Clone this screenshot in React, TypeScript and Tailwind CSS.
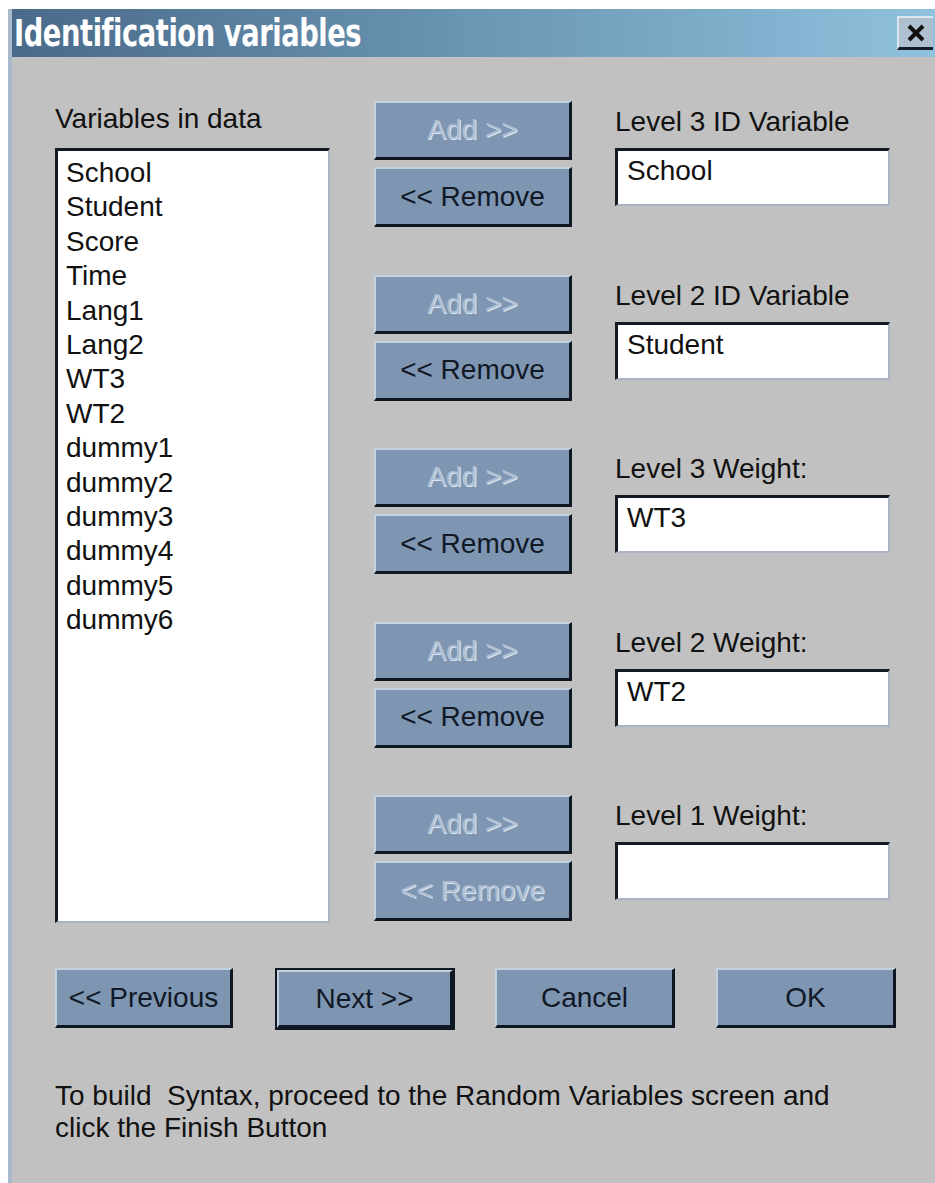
import React from 'react';

const variables = [
  'School', 'Student', 'Score', 'Time', 'Lang1', 'Lang2', 'WT3', 'WT2',
  'dummy1', 'dummy2', 'dummy3', 'dummy4', 'dummy5', 'dummy6',
];

const slots = [
  { label: 'Level 3 ID Variable', value: 'School', canRemove: true },
  { label: 'Level 2 ID Variable', value: 'Student', canRemove: true },
  { label: 'Level 3 Weight:', value: 'WT3', canRemove: true },
  { label: 'Level 2 Weight:', value: 'WT2', canRemove: true },
  { label: 'Level 1 Weight:', value: '', canRemove: false },
];

const font = "font-['Liberation_Sans',Arial,sans-serif]";

function Btn({ children, disabled, className = '' }: { children: React.ReactNode; disabled?: boolean; className?: string }) {
  return (
    <button
      disabled={disabled}
      className={`flex items-center justify-center bg-[#7e96b2] border-t-2 border-l-2 border-t-[#c4d2e0] border-l-[#c4d2e0] border-b-[3px] border-r-[3px] border-b-[#0f1722] border-r-[#0f1722] text-[28px] leading-none ${
        disabled ? 'text-[#aebfd3] [text-shadow:1px_1px_0_#dce6f0]' : 'text-[#111826]'
      } ${className}`}
    >
      {children}
    </button>
  );
}

function Field({ value }: { value: string }) {
  return (
    <div className="h-[58px] bg-white border-t-[3px] border-l-[3px] border-t-[#131a24] border-l-[#131a24] border-b-2 border-r-2 border-b-[#a9b5c4] border-r-[#a9b5c4] px-[9px] pt-[4px] text-[28px] leading-[32px] text-[#111]">
      {value}
    </div>
  );
}

export default function App() {
  return (
    <div className={`w-[935px] h-[1183px] bg-white pt-[9px] pl-[8px] ${font}`}>
      <div className="h-full flex flex-col border-l-4 border-[#a8b9cb]">
        {/* title bar */}
        <div className="h-[48px] flex items-center justify-between pl-[2px] bg-gradient-to-r from-[#4a6a8b] via-[#6b96b4] to-[#8fc2de]">
          <span className="inline-block origin-left scale-x-[0.82] font-['Liberation_Sans_Narrow','DejaVu_Sans_Condensed',sans-serif] font-bold text-[37px] leading-none text-white tracking-[-0.5px]">
            Identification variables
          </span>
          <div className="w-[36px] h-[34px] mr-[2px] flex items-center justify-center bg-[#aebfcf] border-t-2 border-l-2 border-t-[#dbe6ef] border-l-[#dbe6ef] border-b-[3px] border-r-0 border-b-[#141c26]">
            <svg width="20" height="20" viewBox="0 0 20 20">
              <path d="M3 3 L17 17 M17 3 L3 17" stroke="#111" strokeWidth="4" />
            </svg>
          </div>
        </div>

        {/* dialog body */}
        <div className="flex-1 bg-[#c1c1c1] pl-[43px] pt-[44px]">
          <div className="flex">
            <div className="w-[275px] flex flex-col">
              <div className="text-[28px] leading-none text-[#111] pt-[4px] h-[47px]">Variables in data</div>
              <div className="h-[775px] bg-white border-t-[3px] border-l-[3px] border-t-[#131a24] border-l-[#131a24] border-b-2 border-r-2 border-b-[#a9b5c4] border-r-[#a9b5c4] pl-[8px] pt-[5px]">
                {variables.map((v) => (
                  <div key={v} className="text-[28px] leading-[34.4px] text-[#111]">{v}</div>
                ))}
              </div>
            </div>

            <div className="ml-[44px] flex flex-col gap-[47.5px]">
              {slots.map((s) => (
                <div key={s.label} className="flex">
                  <div className="w-[198px] flex flex-col gap-[7px]">
                    <Btn disabled className="h-[59px]">Add &gt;&gt;</Btn>
                    <Btn disabled={!s.canRemove} className="h-[60px]">&lt;&lt; Remove</Btn>
                  </div>
                  <div className="ml-[43px] w-[275px] flex flex-col">
                    <div className="text-[28px] leading-none text-[#111] pt-[7px] h-[47px]">{s.label}</div>
                    <Field value={s.value} />
                  </div>
                </div>
              ))}
            </div>
          </div>

          {/* wizard navigation */}
          <div className="flex mt-[45px]">
            <Btn className="w-[178px] h-[60px]">&lt;&lt; Previous</Btn>
            <div className="ml-[42px] w-[180px] h-[62px] border-2 border-[#0f1722] flex">
              <Btn className="flex-1">Next &gt;&gt;</Btn>
            </div>
            <Btn className="ml-[40px] w-[180px] h-[60px]">Cancel</Btn>
            <Btn className="ml-[41px] w-[180px] h-[60px]">OK</Btn>
          </div>

          <p className="mt-[50px] w-[860px] text-[28px] leading-[32px] text-[#111] whitespace-pre-wrap">
            {'To build  Syntax, proceed to the Random Variables screen and\nclick the Finish Button'}
          </p>
        </div>
      </div>
    </div>
  );
}
